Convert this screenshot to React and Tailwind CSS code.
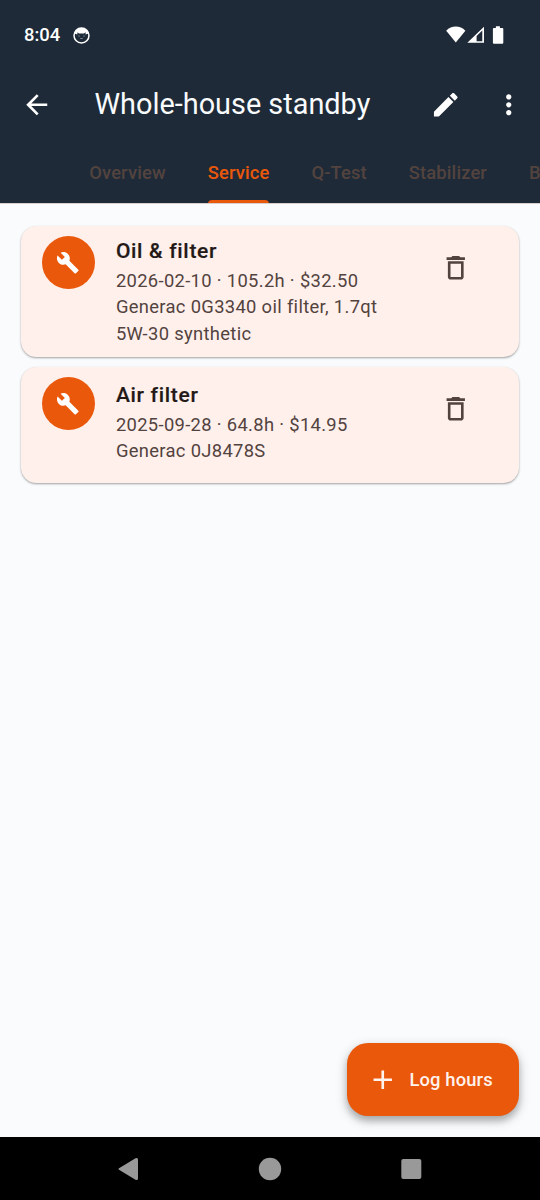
const ICONS = {
  back: 'M20 11H7.83l5.59-5.59L12 4l-8 8 8 8 1.41-1.41L7.83 13H20v-2z',
  edit: 'M3 17.25V21h3.75L17.81 9.94l-3.75-3.75L3 17.25zM20.71 7.04c.39-.39.39-1.02 0-1.41l-2.34-2.34c-.39-.39-1.02-.39-1.41 0l-1.83 1.83 3.75 3.75 1.83-1.83z',
  more: 'M12 8c1.1 0 2-.9 2-2s-.9-2-2-2-2 .9-2 2 .9 2 2 2zm0 2c-1.1 0-2 .9-2 2s.9 2 2 2 2-.9 2-2-.9-2-2-2zm0 6c-1.1 0-2 .9-2 2s.9 2 2 2 2-.9 2-2-.9-2-2-2z',
  build: 'M22.7 19l-9.1-9.1c.9-2.3.4-5-1.5-6.9-2-2-5-2.4-7.4-1.3L9 6 6 9 1.6 4.7C.4 7.1.9 10.1 2.9 12.1c1.9 1.9 4.6 2.4 6.9 1.5l9.1 9.1c.4.4 1 .4 1.4 0l2.3-2.3c.5-.4.5-1.1.1-1.4z',
  trash: 'M6 19c0 1.1.9 2 2 2h8c1.1 0 2-.9 2-2V7H6v12zM8 9h8v10H8V9zm7.5-5l-1-1h-5l-1 1H5v2h14V4z',
  add: 'M19 13h-6v6h-2v-6H5v-2h6V5h2v6h6v2z',
};

function Icon({ name, className = 'size-[31.5px]' }) {
  return (
    <svg viewBox="0 0 24 24" fill="currentColor" className={`shrink-0 ${className}`}>
      <path d={ICONS[name]} />
    </svg>
  );
}

function StatusBar() {
  return (
    <div className="flex h-[68.25px] items-start justify-between pl-[24px] pr-9 pt-[23px] text-white">
      <div className="flex items-center gap-[12.5px]">
        <span className="text-[18.4px] leading-6 font-medium">8:04</span>
        <svg viewBox="0 0 17 17" className="size-[17px]">
          <circle cx="8.5" cy="8.5" r="7.5" fill="none" stroke="white" strokeWidth="1.5" />
          <path d="M1.500 6.500C2.500 2.200 6 1 8.500 1s6 1.200 7 5.500L12.600 7.500V5.200L11 6.600H6L4.400 5.200V7.500z" fill="white" />
          <path d="M5.200 9h1.600M10.200 9h1.600M7.300 11.500h2.400" stroke="#7d8793" strokeWidth="1" />
        </svg>
      </div>
      <svg viewBox="0 0 58 20" className="mt-[1.500px] h-5 w-[58px]">
        <path d="M0.200 5.800C5.500.200 14 .200 19.400 5.800L9.800 17.400z" fill="white" />
        <path d="M21.300 17.700 38 1.800V17.700zM30.600 11V16.300H36.300V5.600z" fill="white" fillRule="evenodd" />
        <path d="M49.900 3V1.300h4V3h2.400a1 1 0 0 1 1 1v13.700a1 1 0 0 1-1 1h-8.400a1 1 0 0 1-1-1V4a1 1 0 0 1 1-1z" fill="white" />
      </svg>
    </div>
  );
}

const TABS = ['Overview', 'Service', 'Q-Test', 'Stabilizer', 'Battery'];

function Tabs({ active }) {
  return (
    <div className="flex h-[62.25px] overflow-hidden border-b border-[#d8cfcd] pl-[68.25px]">
      {TABS.map((tab) => (
        <div
          key={tab}
          className={`relative flex h-[62.25px] shrink-0 items-center px-[21px] pb-px text-[18.375px] font-medium tracking-[0.13px] ${
            tab === active ? 'text-[#ea580c]' : 'text-[#53433f]'
          }`}
        >
          {tab}
          {tab === active && (
            <span className="absolute inset-x-[21px] bottom-0 h-1 rounded-t-[4px] bg-[#ea580c]" />
          )}
        </div>
      ))}
    </div>
  );
}

function ServiceCard({ title, lines, className, textClassName }) {
  return (
    <div
      className={`flex items-start rounded-[15.75px] bg-[#fff0eb] pl-[21px] shadow-[0_1px_2px_rgba(0,0,0,0.28),0_1px_3px_rgba(0,0,0,0.1)] ${className}`}
    >
      <div className="mt-[10.250px] flex size-[52.5px] shrink-0 items-center justify-center rounded-full bg-[#ea580c] text-white">
        <Icon name="build" className="size-[23.6px]" />
      </div>
      <div className={`ml-[21.400px] w-[294px] ${textClassName}`}>
        <div className="mb-[2px] text-[21px] leading-[30.5px] font-medium tracking-[0.7px] text-[#231917] [-webkit-text-stroke:0.2px_#231917]">{title}</div>
        <div className="text-[18.375px] leading-[26.25px] tracking-[0.33px] text-[#53433f]">
          {lines.map((line) => (
            <div key={line} className="whitespace-nowrap">{line}</div>
          ))}
        </div>
      </div>
      <button className="ml-[30.5px] mt-[26px] text-[#53433f]">
        <Icon name="trash" />
      </button>
    </div>
  );
}

function NavBar() {
  return (
    <div className="flex h-[63px] items-center justify-center bg-black text-[#999]">
      <svg viewBox="0 0 310 24" className="h-6 w-[310px]" fill="currentColor">
        <path d="M4 11.200 20.500 1.200Q23 .300 23 2.500V21.500Q23 23.700 20.500 22.800L4 12.800Q2.600 12 4 11.200z" />
        <circle cx="155" cy="12" r="11.200" />
        <rect x="286.300" y="2" width="20" height="20" rx="2" />
      </svg>
    </div>
  );
}

export default function App() {
  return (
    <div className="flex h-[1200px] w-[540px] flex-col overflow-hidden bg-[#f9fbfd] font-['Roboto',sans-serif]">
      <header className="bg-[#1e2a37]">
        <StatusBar />
        <div className="flex h-[73.5px] items-center pl-[21px] text-white">
          <Icon name="back" />
          <h1 className="ml-[42px] flex-1 text-[28.875px] font-normal text-[#f8fafc]">Whole-house standby</h1>
          <Icon name="edit" />
          <Icon name="more" className="ml-[31.5px] mr-[15.750px] size-[31.5px]" />
        </div>
        <Tabs active="Service" />
      </header>
      <main className="flex flex-1 flex-col px-[21px] pt-[22px]">
        <div className="flex flex-col gap-[10px]">
          <ServiceCard
            className="h-[131px]"
            textClassName="mt-[9.500px]"
            title="Oil & filter"
            lines={['2026-02-10 · 105.2h · $32.50', 'Generac 0G3340 oil filter, 1.7qt', '5W-30 synthetic']}
          />
          <ServiceCard
            className="h-[116px]"
            textClassName="mt-[12.500px]"
            title="Air filter"
            lines={['2025-09-28 · 64.8h · $14.95', 'Generac 0J8478S']}
          />
        </div>
        <button className="mb-[21px] mt-auto flex h-[73.5px] w-[172.500px] items-center gap-[11px] self-end rounded-[21px] bg-[#ea580c] pl-[20.500px] text-[18.375px] font-medium tracking-[0.13px] text-[#fff3ed] shadow-[0_5px_6px_rgba(0,0,0,0.16),0_4px_12px_rgba(0,0,0,0.24)]">
          <Icon name="add" />
          <span className="pt-px whitespace-nowrap">Log hours</span>
        </button>
      </main>
      <NavBar />
    </div>
  );
}
